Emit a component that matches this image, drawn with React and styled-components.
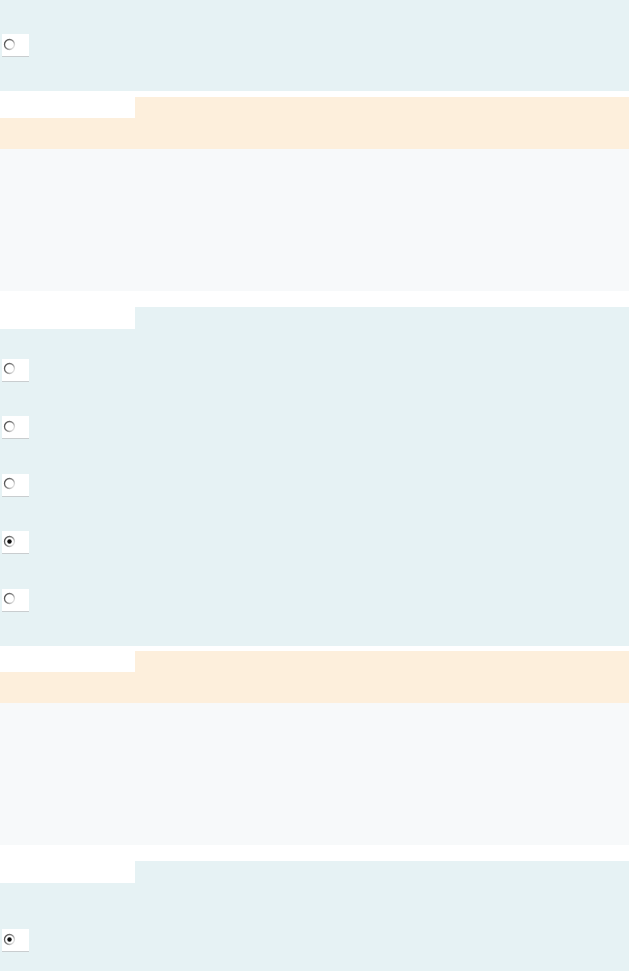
import React from "react";
import styled, { createGlobalStyle } from "styled-components";

const Global = createGlobalStyle`
  html, body { margin: 0; padding: 0; background: #ffffff; }
  body { font-family: "Liberation Sans", Arial, sans-serif; }
`;

const TONES = {
  blue: { head: "#e6f2f4", body: "#e6f2f4", after: "5.5px" },
  orange: { head: "#fdefdc", body: "#f7f9fa", after: "16px" },
};

const Page = styled.div`
  display: flex;
  flex-direction: column;
  width: 629px;
  min-height: 971px;
  overflow: hidden;
`;

const Card = styled.section`
  display: flex;
  flex-direction: column;
  margin-bottom: ${(p) => TONES[p.$tone].after};
  background: ${(p) => TONES[p.$tone].body};
`;

const Header = styled.div`
  display: flex;
  flex-direction: column;
  height: ${(p) => p.$height}px;
  background: ${(p) => TONES[p.$tone].head};
`;

const Tab = styled.div`
  width: 135px;
  height: ${(p) => p.$height}px;
  background: #ffffff;
`;

const Body = styled.div`
  height: ${(p) => p.$height}px;
`;

const RadioList = styled.div`
  display: flex;
  flex-direction: column;
  gap: 34.5px;
  padding: ${(p) => p.$top}px 0 ${(p) => p.$bottom}px 2px;
`;

const RadioBox = styled.label`
  display: flex;
  align-items: center;
  width: 27px;
  height: 22px;
  background: #ffffff;
  border-bottom: 1px solid #c9cdcf;
  box-sizing: content-box;
`;

const Dot = styled.svg`
  display: block;
  margin-left: 1px;
  margin-top: -2px;
`;

function Radio({ checked, id }) {
  return (
    <RadioBox>
      <Dot width="13" height="13" viewBox="0 0 13 13">
        <defs>
          <linearGradient id={`g${id}`} x1="0" y1="0.2" x2="1" y2="0.8">
            <stop offset="0" stopColor="#4a4a4a" />
            <stop offset="0.55" stopColor="#8a8a8a" />
            <stop offset="1" stopColor="#f0f0f0" />
          </linearGradient>
        </defs>
        <circle cx="6.5" cy="6.5" r="5" fill="#ffffff" stroke={`url(#g${id})`} strokeWidth="1.3" />
        {checked && <circle cx="6.5" cy="6.5" r="2.2" fill="#111111" />}
      </Dot>
    </RadioBox>
  );
}

export default function App() {
  return (
    <Page>
      <Global />
      <Card $tone="blue">
        <RadioList $top={34} $bottom={34}>
          <Radio id="a1" />
        </RadioList>
      </Card>

      <Card $tone="orange">
        <Header $tone="orange" $height={52}>
          <Tab $height={21} />
        </Header>
        <Body $height={142} />
      </Card>

      <Card $tone="blue">
        <Header $tone="blue" $height={22}>
          <Tab $height={22} />
        </Header>
        <RadioList $top={30} $bottom={34}>
          <Radio id="c1" />
          <Radio id="c2" />
          <Radio id="c3" />
          <Radio id="c4" checked />
          <Radio id="c5" />
        </RadioList>
      </Card>

      <Card $tone="orange">
        <Header $tone="orange" $height={52}>
          <Tab $height={21} />
        </Header>
        <Body $height={142} />
      </Card>

      <Card $tone="blue">
        <Header $tone="blue" $height={22}>
          <Tab $height={22} />
        </Header>
        <RadioList $top={46} $bottom={34}>
          <Radio id="e1" checked />
        </RadioList>
      </Card>
    </Page>
  );
}
